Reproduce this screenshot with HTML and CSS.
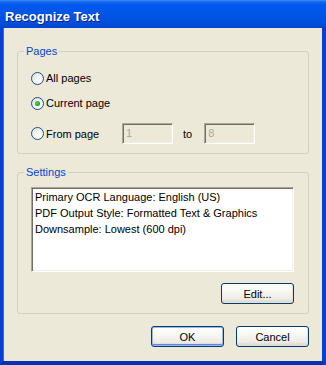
FILE: index.html
```html
<!DOCTYPE html>
<html>
<head>
<meta charset="utf-8">
<link rel="stylesheet" href="styles.css">
</head>
<body>
<div class="window">
  <div class="titlebar"><span class="title">Recognize Text</span></div>
  <div class="client">
    <fieldset class="group pages">
      <legend>Pages</legend>
      <div class="row r1"><span class="radio"></span><span class="lbl">All pages</span></div>
      <div class="row r2"><span class="radio checked"></span><span class="lbl">Current page</span></div>
      <div class="row r3">
        <span class="radio"></span><span class="lbl wide">From page</span>
        <span class="edit">1</span>
        <span class="to">to</span>
        <span class="edit">8</span>
      </div>
    </fieldset>
    <fieldset class="group settings">
      <legend>Settings</legend>
      <div class="listbox">
        <div>Primary OCR Language: English (US)</div>
        <div>PDF Output Style: Formatted Text &amp; Graphics</div>
        <div>Downsample: Lowest (600 dpi)</div>
      </div>
      <div class="editrow"><button class="btn">Edit...</button></div>
    </fieldset>
    <div class="buttons">
      <button class="btn default">OK</button>
      <button class="btn">Cancel</button>
    </div>
  </div>
</div>
</body>
</html>
```
FILE: styles.css
```css
html, body {
  margin: 0;
  padding: 0;
  width: 326px;
  height: 365px;
  overflow: hidden;
  background: #ECE9D8;
}
.window {
  width: 326px;
  height: 365px;
  box-sizing: border-box;
  display: flex;
  flex-direction: column;
  font-family: "Liberation Sans", Arial, sans-serif;
  font-size: 11px;
  color: #000;
}
.titlebar {
  height: 28px;
  flex: none;
  box-sizing: border-box;
  padding: 9px 0 0 5px;
  background: linear-gradient(to bottom, #3D8DF7 0px, #1466EC 2px, #0058EE 5px, #0055E5 14px, #0050DC 22px, #0045CF 28px);
}
.title {
  display: block;
  font-family: "Liberation Sans", Arial, sans-serif;
  font-weight: bold;
  font-size: 13px;
  line-height: 16px;
  color: #fff;
  letter-spacing: 0;
  text-shadow: 1px 1px 0 #0A1E8C;
}
.client {
  flex: 1;
  box-sizing: border-box;
  border-left: 3px solid #0840D6;
  border-right: 4px solid #0840D6;
  border-bottom: 4px solid #0831B0;
  box-shadow: inset 1px 0 0 #2E6FE8;
  padding: 17px 13px 0 14px;
  display: flex;
  flex-direction: column;
}
.group {
  margin: 0;
  border: 1px solid #D0D0BF;
  border-radius: 3px;
  min-width: 0;
}
legend {
  margin-left: -7px;
  padding: 0 2px;
  color: #0046D5;
  font-size: 11px;
  line-height: 13px;
}
.pages {
  padding: 9px 0 9px 13px;
}
.row {
  display: flex;
  align-items: center;
  height: 22px;
}
.r2 { margin-top: 3px; }
.r3 { margin-top: 9px; height: 21px; }
.radio {
  width: 13px;
  height: 13px;
  box-sizing: border-box;
  border: 1px solid #1C5180;
  border-radius: 50%;
  background: radial-gradient(circle at 65% 65%, #FFFFFF 0, #F3F3F0 40%, #DCDCD5 100%);
  display: flex;
  align-items: center;
  justify-content: center;
  flex: none;
}
.radio.checked::after {
  content: "";
  width: 5px;
  height: 5px;
  border-radius: 50%;
  background: radial-gradient(circle at 40% 40%, #5EDA5E 0, #21A121 60%, #1A7E1A 100%);
}
.lbl {
  margin-left: 2px;
}
.lbl.wide {
  width: 76px;
}
.edit {
  width: 51px;
  height: 21px;
  box-sizing: border-box;
  border-top: 1px solid #ACA899;
  border-left: 1px solid #ACA899;
  border-right: 1px solid #FFFFFF;
  border-bottom: 1px solid #FFFFFF;
  box-shadow: inset 1px 1px 0 #716F64, inset -1px -1px 0 #F1EFE2;
  color: #ACA899;
  padding: 3px 0 0 3px;
  line-height: 13px;
  background: #ECE9D8;
}
.to {
  margin: 0 12px 0 10px;
}
.settings {
  margin-top: 12px;
  padding: 8px 14px 9px 13px;
}
.listbox {
  height: 85px;
  box-sizing: border-box;
  background: #fff;
  border-top: 1px solid #ACA899;
  border-left: 1px solid #ACA899;
  border-right: 1px solid #FFFFFF;
  border-bottom: 1px solid #FFFFFF;
  box-shadow: inset 1px 1px 0 #716F64, inset -1px -1px 0 #F1EFE2;
  padding: 1px 2px 0 3px;
  line-height: 16px;
}
.editrow {
  display: flex;
  justify-content: flex-end;
  margin-top: 11px;
}
.btn {
  width: 73px;
  height: 21px;
  box-sizing: border-box;
  margin: 0;
  padding: 0;
  font-family: "Liberation Sans", Arial, sans-serif;
  font-size: 11px;
  color: #000;
  border: 1px solid #003C74;
  border-radius: 3px;
  background: linear-gradient(to bottom, #FFFFFF 0%, #F7F7F3 40%, #ECEBE4 80%, #D6D0C5 100%);
  box-shadow: inset -1px -1px 0 #E3E0D5;
}
.btn.default {
  box-shadow: inset 0 0 0 1px #98B8EA, inset 0 -1px 0 1px #6982EE;
}
.buttons {
  margin-top: 12px;
  display: flex;
  justify-content: flex-end;
  gap: 12px;
}
```
